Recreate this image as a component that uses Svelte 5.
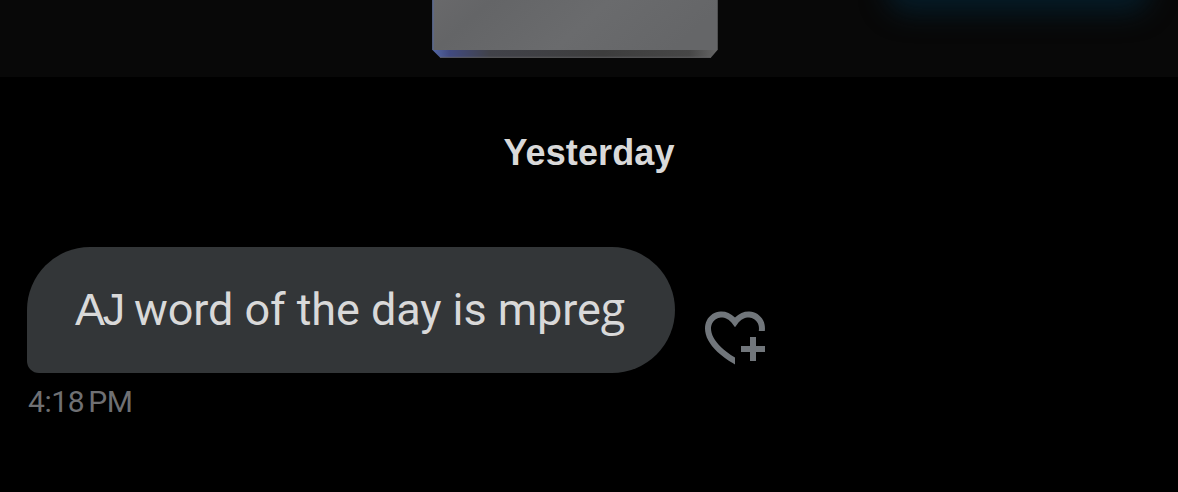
<script>
  const day = 'Yesterday';
  const message = { text: 'AJ word of the day is mpreg', time: '4:18 PM' };

  // initials are set tight, and g takes its two-storey form
  const parts = message.text.split(/(\b[A-Z]{2,}\b|g)/).filter(Boolean);
  const isInitials = (part) => /^[A-Z]{2,}$/.test(part);
</script>

<div class="conversation">
  <header class="card">
    <div class="glow"></div>
    <svg class="block" width="286" height="58" viewBox="0 0 286 58" aria-hidden="true">
      <defs>
        <linearGradient id="face" x1="0" y1="0" x2="1" y2="0.2">
          <stop offset="0" stop-color="#69696b" />
          <stop offset="0.2" stop-color="#646567" />
          <stop offset="0.6" stop-color="#6a6b6d" />
          <stop offset="1" stop-color="#656668" />
        </linearGradient>
        <linearGradient id="edge">
          <stop offset="0" stop-color="#5468a5" />
          <stop offset="0.06" stop-color="#414a80" />
          <stop offset="0.2" stop-color="#414249" />
          <stop offset="0.6" stop-color="#3d3d3d" />
          <stop offset="0.9" stop-color="#464646" />
          <stop offset="1" stop-color="#666" />
        </linearGradient>
      </defs>
      <path d="M0.500 0h285v50l-6.500 7.500H8L0.500 50z" fill="url(#edge)" />
      <path d="M0.500 0h285v50H0.500z" fill="url(#face)" />
      <path d="M1 0v50" stroke="#596d9f" />
      <path d="M8 57.300h271" stroke="#777779" stroke-width="0.700" />
    </svg>
  </header>

  <h2 class="day">{day}</h2>

  <div class="row">
    <p class="bubble">{#each parts as part}<span class:initials={isInitials(part)} class:looped={part === 'g'}>{part}</span>{/each}</p>
    <button class="react" aria-label="Add reaction">
      <svg viewBox="0 0 24 24" width="72" height="72">
        <path d="M17 12v3h-2.998v2h3v3h2v-3h3v-2h-3.001v-3H17zm-5 6.839c-3.871-2.340-6.053-4.639-7.127-6.609-1.112-2.040-1.031-3.700-.479-4.820.561-1.130 1.667-1.840 2.910-1.910 1.222-.060 2.680.510 3.892 2.160l.806 1.090.805-1.090c1.211-1.650 2.668-2.220 3.890-2.160 1.242.070 2.347.780 2.908 1.910.334.677.490 1.554.321 2.590h2.011c.153-1.283-.039-2.469-.539-3.480-.887-1.790-2.647-2.910-4.601-3.010-1.650-.090-3.367.560-4.796 2.010-1.430-1.450-3.147-2.100-4.798-2.010-1.954.100-3.714 1.220-4.601 3.010-.896 1.810-.846 4.170.514 6.670 1.353 2.480 4.003 5.120 8.382 7.670l.502.299v-2.320z" />
      </svg>
    </button>
  </div>

  <time class="time">{message.time}</time>
</div>

<style>
  :global(body) {
    margin: 0;
    background: #000;
  }

  .conversation {
    height: 492px;
    overflow: hidden;
    background: #000;
    font-family: Roboto, 'Liberation Sans', sans-serif;
  }

  .card {
    position: relative;
    height: 77px;
    padding-left: 432px;
    overflow: hidden;
    background: #080808;
  }

  .glow {
    position: absolute;
    top: -50px;
    left: 886px;
    width: 264px;
    height: 63px;
    border-radius: 24px;
    background: #051b27;
    filter: blur(13px);
  }

  .block {
    display: block;
  }

  .day {
    margin: 54px 0 0;
    color: #d9d9d9;
    font-family: 'Liberation Sans', Roboto, sans-serif;
    font-size: 36px;
    font-weight: 700;
    line-height: 44px;
    letter-spacing: 0.1px;
    text-align: center;
  }

  .row {
    display: flex;
    align-items: flex-end;
    gap: 24px;
    margin: 72px 0 0 27px;
  }

  .bubble {
    box-sizing: border-box;
    width: 648px;
    height: 126px;
    margin: 0;
    padding: 35px 48px;
    border-radius: 63px 63px 63px 12px;
    background: #333638;
    color: #d9d9d9;
    font-size: 45px;
    line-height: 56px;
    letter-spacing: -0.08px;
    white-space: nowrap;
  }

  .initials {
    font-family: 'Liberation Sans', Roboto, sans-serif;
    line-height: 1;
    letter-spacing: -2.3px;
  }

  .looped {
    font-family: 'Open Sans', Roboto, sans-serif;
    line-height: 1;
  }

  .react {
    display: flex;
    padding: 0;
    border: 0;
    background: none;
    cursor: pointer;
  }

  .react svg {
    fill: #71767b;
  }

  .time {
    display: block;
    margin: 11px 0 0 28px;
    color: #6f7073;
    font-size: 30px;
    line-height: 36px;
    letter-spacing: -0.4px;
    word-spacing: -3px;
  }
</style>
